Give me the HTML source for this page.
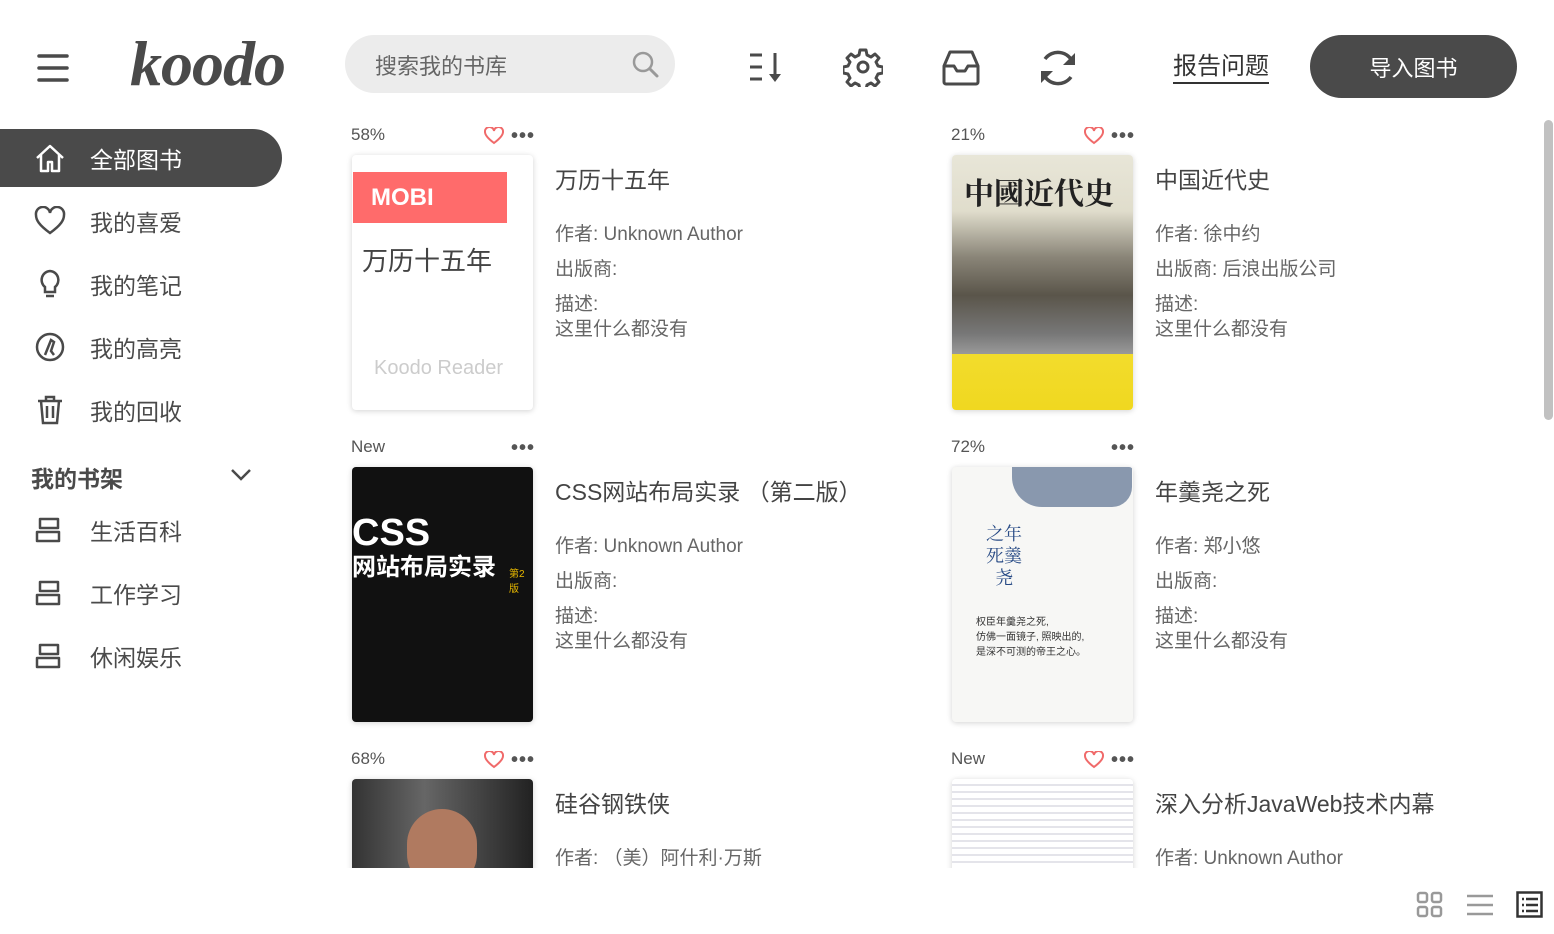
<!DOCTYPE html>
<html style="overflow:hidden;width:1554px;height:934px"><head><meta charset="utf-8"><style>
*{margin:0;padding:0;box-sizing:border-box}
body{width:1554px;height:934px;overflow:hidden;background:#fff;font-family:"Liberation Sans","Noto Sans CJK SC",sans-serif;color:#4a4a4a;position:relative}
.abs{position:absolute}
.nav{position:absolute;left:0;width:282px;height:58px;display:flex;align-items:center;font-size:23px;color:#4a4a4a}
.nav svg{position:absolute;left:34px}
.nav span{position:absolute;left:90px}
.pct{position:absolute;font-size:17px;color:#555}
.dots{position:absolute;font-size:20px;letter-spacing:1px;color:#555;font-weight:bold}
.cover{position:absolute;width:181px;height:255px;border-radius:4px;box-shadow:0 1px 6px rgba(0,0,0,.18);overflow:hidden}
.title{position:absolute;font-size:23px;color:#444}
.info{position:absolute;font-size:19px;color:#666;line-height:35px}
</style></head><body>
<svg class="abs" style="left:37px;top:53px" width="32" height="30"><g stroke="#4a4a4a" stroke-width="3.5" stroke-linecap="round"><line x1="2" y1="3" x2="30" y2="3"/><line x1="2" y1="15" x2="30" y2="15"/><line x1="2" y1="27" x2="30" y2="27"/></g></svg>
<div class="abs" style="left:130px;top:28px;font-family:'Liberation Serif',serif;font-style:italic;font-weight:bold;font-size:64px;color:#4a4a4a;letter-spacing:-1px;line-height:72px">koodo</div>
<div class="abs" style="left:345px;top:35px;width:330px;height:58px;border-radius:29px;background:#ececec"></div>
<div class="abs" style="left:375px;top:49px;font-size:22px;color:#666">搜索我的书库</div>
<svg class="abs" style="left:632px;top:51px" width="28" height="28"><circle cx="11" cy="11" r="9" fill="none" stroke="#999" stroke-width="2.5"/><line x1="18" y1="18" x2="25" y2="25" stroke="#999" stroke-width="3" stroke-linecap="round"/></svg>
<svg class="abs" style="left:748px;top:50px" width="36" height="34"><g stroke="#4a4a4a" stroke-width="3"><line x1="2" y1="5" x2="14" y2="5"/><line x1="2" y1="17" x2="14" y2="17"/><line x1="2" y1="29" x2="14" y2="29"/><line x1="27" y1="3" x2="27" y2="29"/></g><path d="M21 24 L27 32 L33 24Z" fill="#4a4a4a"/></svg>
<svg class="abs" style="left:843px;top:47px" width="40" height="40" viewBox="0 0 40 40"><path d="M17 3h6l1 5 4 2 4-3 4 4-3 4 2 4 5 1v6l-5 1-2 4 3 4-4 4-4-3-4 2-1 5h-6l-1-5-4-2-4 3-4-4 3-4-2-4-5-1v-6l5-1 2-4-3-4 4-4 4 3 4-2z" fill="none" stroke="#4a4a4a" stroke-width="3" stroke-linejoin="round"/><circle cx="20" cy="20" r="5" fill="none" stroke="#4a4a4a" stroke-width="3"/></svg>
<svg class="abs" style="left:942px;top:50px" width="38" height="36"><path d="M8 2h22l6 14v16a2 2 0 0 1-2 2H4a2 2 0 0 1-2-2V16z M2 16h10l3 5h8l3-5h10" fill="none" stroke="#4a4a4a" stroke-width="3" stroke-linejoin="round"/></svg>
<svg class="abs" style="left:1037px;top:47px" width="42" height="42" viewBox="0 0 42 42"><path d="M36 16A16 16 0 0 0 8 12 M6 26A16 16 0 0 0 34 30" fill="none" stroke="#4a4a4a" stroke-width="3.5"/><path d="M38 6v12h-12z M4 36V24h12z" fill="#4a4a4a"/></svg>
<div class="abs" style="left:1173px;top:52px;font-size:24px;color:#333;border-bottom:2.5px solid #333;line-height:30px">报告问题</div>
<div class="abs" style="left:1310px;top:35px;width:207px;height:63px;border-radius:32px;background:#4a4a4a;color:#fff;font-size:22px;display:flex;align-items:center;justify-content:center">导入图书</div>
<div class="nav" style="top:129px;background:#4a4a4a;border-radius:0 29px 29px 0;color:#fff">
<svg width="32" height="32" viewBox="0 0 32 32"><path d="M3 16L16 4l13 12M7 13v16h7v-9h4v9h7V13" fill="none" stroke="#fff" stroke-width="2.5" stroke-linejoin="round"/></svg><span>全部图书</span></div>
<div class="nav" style="top:192px"><svg width="32" height="30" viewBox="0 0 32 30"><path d="M16 27C5 19 2 14 2 9a7 7 0 0 1 14-2 7 7 0 0 1 14 2c0 5-3 10-14 18z" fill="none" stroke="#4a4a4a" stroke-width="2.5"/></svg><span>我的喜爱</span></div>
<div class="nav" style="top:255px"><svg width="32" height="32" viewBox="0 0 32 32"><path d="M16 3a9 9 0 0 0-5 16v5h10v-5a9 9 0 0 0-5-16zM12 28h8" fill="none" stroke="#4a4a4a" stroke-width="2.5"/></svg><span>我的笔记</span></div>
<div class="nav" style="top:318px"><svg width="32" height="32" viewBox="0 0 32 32"><circle cx="16" cy="16" r="13" fill="none" stroke="#4a4a4a" stroke-width="2.5"/><path d="M11 24l6-15 3 2-3 9 3 4" fill="none" stroke="#4a4a4a" stroke-width="2.5"/></svg><span>我的高亮</span></div>
<div class="nav" style="top:381px"><svg width="32" height="32" viewBox="0 0 32 32"><path d="M4 7h24M12 7V3h8v4M7 7l2 22h14l2-22M13 12v12M19 12v12" fill="none" stroke="#4a4a4a" stroke-width="2.5"/></svg><span>我的回收</span></div>
<div class="abs" style="left:31px;top:460px;font-size:23px;font-weight:bold;color:#4a4a4a">我的书架</div>
<svg class="abs" style="left:230px;top:468px" width="22" height="14"><path d="M2 2l9 9 9-9" fill="none" stroke="#4a4a4a" stroke-width="2.5"/></svg>
<div class="nav" style="top:501px"><svg width="30" height="26" viewBox="0 0 30 26"><path d="M6 2h18v9H6zM3 15h22v9H3z" fill="none" stroke="#4a4a4a" stroke-width="2.5" stroke-linejoin="round"/></svg><span>生活百科</span></div>
<div class="nav" style="top:564px"><svg width="30" height="26" viewBox="0 0 30 26"><path d="M6 2h18v9H6zM3 15h22v9H3z" fill="none" stroke="#4a4a4a" stroke-width="2.5" stroke-linejoin="round"/></svg><span>工作学习</span></div>
<div class="nav" style="top:627px"><svg width="30" height="26" viewBox="0 0 30 26"><path d="M6 2h18v9H6zM3 15h22v9H3z" fill="none" stroke="#4a4a4a" stroke-width="2.5" stroke-linejoin="round"/></svg><span>休闲娱乐</span></div>
<div class="abs" style="left:330px;top:118px;width:1210px;height:750px;overflow:hidden">
<div style="position:absolute;left:-330px;top:-118px;width:1554px;height:934px">
<div class="pct" style="left:351px;top:125px">58%</div>
<svg class="abs" style="left:484px;top:127px" width="20" height="18"><path d="M10 16C2 10 1 7 1 5a4.5 4.5 0 0 1 9-1 4.5 4.5 0 0 1 9 1c0 2-1 5-9 11z" fill="none" stroke="#f06a6a" stroke-width="2"/></svg>
<div class="dots" style="left:511px;top:125px">•••</div>
<div class="cover" style="left:352px;top:155px;background:#fff">
<div class="abs" style="left:1px;top:17px;width:154px;height:51px;background:#ff6b6b;color:#fff;font-size:24px;font-weight:bold;padding:12px 0 0 18px">MOBI</div>
<div class="abs" style="left:10px;top:86px;font-size:26px;color:#444">万历十五年</div>
<div class="abs" style="left:22px;top:202px;font-size:20px;color:#ccc">Koodo Reader</div></div>
<div class="title" style="left:555px;top:161px">万历十五年</div>
<div class="info" style="left:555px;top:217px">作者: Unknown Author<br>出版商:<br>描述:</div>
<div class="info" style="left:555px;top:312px">这里什么都没有</div>
<div class="pct" style="left:951px;top:125px">21%</div>
<svg class="abs" style="left:1084px;top:127px" width="20" height="18"><path d="M10 16C2 10 1 7 1 5a4.5 4.5 0 0 1 9-1 4.5 4.5 0 0 1 9 1c0 2-1 5-9 11z" fill="none" stroke="#f06a6a" stroke-width="2"/></svg>
<div class="dots" style="left:1111px;top:125px">•••</div>
<div class="cover" style="left:952px;top:155px;background:linear-gradient(#e8e6d8 0,#e0ddcc 22%,#8a8578 40%,#5a554a 55%,#777 70%,#999 78%,#f2dc2c 78%,#f0d820 100%)">
<div class="abs" style="left:12px;top:14px;font-family:'Noto Serif CJK SC',serif;font-size:30px;color:#222;font-weight:bold">中國近代史</div></div>
<div class="title" style="left:1155px;top:161px">中国近代史</div>
<div class="info" style="left:1155px;top:217px">作者: 徐中约<br>出版商: 后浪出版公司<br>描述:</div>
<div class="info" style="left:1155px;top:312px">这里什么都没有</div>
<div class="pct" style="left:351px;top:437px">New</div>
<div class="dots" style="left:511px;top:437px">•••</div>
<div class="cover" style="left:352px;top:467px;background:#111">
<div class="abs" style="left:0;top:45px;font-size:38px;font-weight:bold;color:#fff">CSS</div>
<div class="abs" style="left:0;top:80px;font-size:24px;font-weight:bold;color:#fff">网站布局实录</div>
<div class="abs" style="left:157px;top:98px;font-size:10px;color:#e8b800">第2版</div></div>
<div class="title" style="left:555px;top:473px">CSS网站布局实录 （第二版）</div>
<div class="info" style="left:555px;top:529px">作者: Unknown Author<br>出版商:<br>描述:</div>
<div class="info" style="left:555px;top:624px">这里什么都没有</div>
<div class="pct" style="left:951px;top:437px">72%</div>
<div class="dots" style="left:1111px;top:437px">•••</div>
<div class="cover" style="left:952px;top:467px;background:#f7f7f5">
<div class="abs" style="left:60px;top:0;width:120px;height:40px;background:#5a6f90;border-radius:0 0 20px 30px;opacity:.7"></div>
<div class="abs" style="left:34px;top:55px;font-family:'Noto Serif CJK SC',serif;font-size:18px;color:#274a85;line-height:22px;width:36px">之年<br>死羹<br>&nbsp; 尧</div>
<div class="abs" style="left:24px;top:148px;font-size:10px;color:#333;line-height:15px">权臣年羹尧之死,<br>仿佛一面镜子, 照映出的,<br>是深不可测的帝王之心。</div></div>
<div class="title" style="left:1155px;top:473px">年羹尧之死</div>
<div class="info" style="left:1155px;top:529px">作者: 郑小悠<br>出版商:<br>描述:</div>
<div class="info" style="left:1155px;top:624px">这里什么都没有</div>
<div class="pct" style="left:351px;top:749px">68%</div>
<svg class="abs" style="left:484px;top:751px" width="20" height="18"><path d="M10 16C2 10 1 7 1 5a4.5 4.5 0 0 1 9-1 4.5 4.5 0 0 1 9 1c0 2-1 5-9 11z" fill="none" stroke="#f06a6a" stroke-width="2"/></svg>
<div class="dots" style="left:511px;top:749px">•••</div>
<div class="cover" style="left:352px;top:779px;background:linear-gradient(90deg,#333,#666 40%,#222)">
<div class="abs" style="left:55px;top:30px;width:70px;height:80px;border-radius:35px;background:#b07a60"></div></div>
<div class="title" style="left:555px;top:785px">硅谷钢铁侠</div>
<div class="info" style="left:555px;top:841px">作者: （美）阿什利·万斯</div>
<div class="pct" style="left:951px;top:749px">New</div>
<svg class="abs" style="left:1084px;top:751px" width="20" height="18"><path d="M10 16C2 10 1 7 1 5a4.5 4.5 0 0 1 9-1 4.5 4.5 0 0 1 9 1c0 2-1 5-9 11z" fill="none" stroke="#f06a6a" stroke-width="2"/></svg>
<div class="dots" style="left:1111px;top:749px">•••</div>
<div class="cover" style="left:952px;top:779px;background:repeating-linear-gradient(#fff 0,#fff 5px,#e4e4ea 5px,#e4e4ea 7px)"></div>
<div class="title" style="left:1155px;top:785px">深入分析JavaWeb技术内幕</div>
<div class="info" style="left:1155px;top:841px">作者: Unknown Author</div>
</div></div>
<div class="abs" style="left:1544px;top:120px;width:9px;height:300px;border-radius:5px;background:#c1c1c1"></div>
<svg class="abs" style="left:1416px;top:891px" width="28" height="28"><g fill="none" stroke="#999" stroke-width="2.5"><rect x="2" y="2" width="9" height="9" rx="2"/><rect x="16" y="2" width="9" height="9" rx="2"/><rect x="2" y="16" width="9" height="9" rx="2"/><rect x="16" y="16" width="9" height="9" rx="2"/></g></svg>
<svg class="abs" style="left:1466px;top:893px" width="28" height="24"><g stroke="#999" stroke-width="2.5"><line x1="1" y1="3" x2="27" y2="3"/><line x1="1" y1="12" x2="27" y2="12"/><line x1="1" y1="21" x2="27" y2="21"/></g></svg>
<svg class="abs" style="left:1516px;top:891px" width="27" height="27"><rect x="1.5" y="1.5" width="24" height="24" fill="none" stroke="#333" stroke-width="2.5"/><g stroke="#333" stroke-width="2.5"><line x1="6" y1="8" x2="8" y2="8"/><line x1="10" y1="8" x2="22" y2="8"/><line x1="6" y1="14" x2="8" y2="14"/><line x1="10" y1="14" x2="22" y2="14"/><line x1="6" y1="20" x2="8" y2="20"/><line x1="10" y1="20" x2="22" y2="20"/></g></svg>
</body></html>
